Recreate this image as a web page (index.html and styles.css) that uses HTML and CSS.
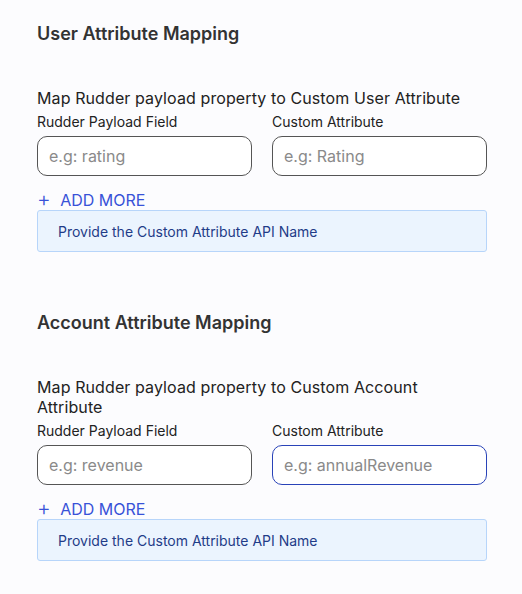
FILE: index.html
```html
<!DOCTYPE html>
<html>
<head>
    <meta charset="UTF-8">
    <meta name="viewport" content="width=device-width, initial-scale=1.0">
    <title>Attribute Mapping</title>
    <link rel="stylesheet" href="styles.css">
</head>
<body>
    <div class="page">
        <section class="mapping">
            <h2 class="mappingTitle">User Attribute Mapping</h2>
            <div class="mapLabel">Map Rudder payload property to Custom User Attribute</div>
            <div class="fieldRow">
                <label class="field">
                    <span class="fieldLabel">Rudder Payload Field</span>
                    <input class="fieldInput" type="text" placeholder="e.g: rating">
                </label>
                <label class="field">
                    <span class="fieldLabel">Custom Attribute</span>
                    <input class="fieldInput" type="text" placeholder="e.g: Rating">
                </label>
            </div>
            <button class="addMore"><span class="plus">+</span> ADD MORE</button>
            <div class="hint">Provide the Custom Attribute API Name</div>
        </section>

        <section class="mapping">
            <h2 class="mappingTitle">Account Attribute Mapping</h2>
            <div class="mapLabel">Map Rudder payload property to Custom Account Attribute</div>
            <div class="fieldRow">
                <label class="field">
                    <span class="fieldLabel">Rudder Payload Field</span>
                    <input class="fieldInput" type="text" placeholder="e.g: revenue">
                </label>
                <label class="field">
                    <span class="fieldLabel">Custom Attribute</span>
                    <input class="fieldInput focused" type="text" placeholder="e.g: annualRevenue">
                </label>
            </div>
            <button class="addMore"><span class="plus">+</span> ADD MORE</button>
            <div class="hint">Provide the Custom Attribute API Name</div>
        </section>
    </div>
</body>
</html>
```

FILE: styles.css
```css
body {
    margin: 0;
    background-color: #fcfcfe;
    font-family: Inter, "Noto Sans", sans-serif;
    color: #2b2b2b;
}
.page {
    padding: 23px 35px 0 37px;
    width: 450px;
    display: flex;
    flex-direction: column;
    gap: 60px;
}
.mapping {
    display: flex;
    flex-direction: column;
}
.mappingTitle {
    margin: 0 0 43px 0;
    font-size: 18px;
    font-weight: 600;
    line-height: 22px;
    color: #333;
}
.mapLabel {
    max-width: 440px;
    font-size: 16px;
    line-height: 20px;
    letter-spacing: 0.1px;
    color: #222;
}
.fieldRow {
    display: flex;
    gap: 20px;
    margin-top: 5px;
}
.field {
    flex: 1;
    min-width: 0;
    display: flex;
    flex-direction: column;
    gap: 5px;
}
.fieldLabel {
    font-size: 14px;
    line-height: 18px;
    color: #222;
}
.fieldInput {
    box-sizing: border-box;
    width: 100%;
    min-width: 0;
    height: 40px;
    border: 1px solid #555;
    border-radius: 10px;
    padding: 0 11px 1px;
    font-family: inherit;
    font-size: 16px;
    background: #fff;
    outline: none;
}
.fieldInput::placeholder {
    color: #8a8a8a;
}
.focused {
    border-color: #2943b8;
}
.addMore {
    align-self: flex-start;
    background: none;
    border: none;
    padding: 0;
    margin-top: 14px;
    font-family: inherit;
    font-size: 16px;
    line-height: 18px;
    color: #3852d8;
    cursor: pointer;
}
.plus {
    font-size: 21px;
    font-weight: 300;
    margin-right: 5px;
}
.hint {
    margin-top: 1px;
    box-sizing: border-box;
    height: 42px;
    display: flex;
    align-items: center;
    padding-left: 20px;
    background: #ebf4fe;
    border: 1px solid #b7d5fa;
    border-radius: 3px;
    font-size: 14px;
    color: #1f3c88;
}
```
